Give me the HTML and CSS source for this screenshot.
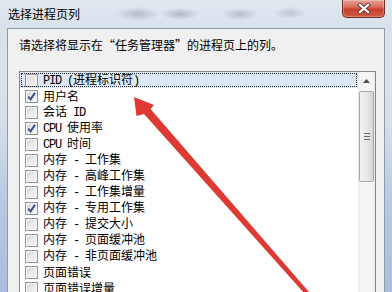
FILE: index.html
```html
<!DOCTYPE html>
<html lang="zh-CN">
<head>
<meta charset="utf-8">
<title>选择进程页列</title>
<link rel="stylesheet" href="styles.css">
</head>
<body>
<div class="win">
  <div class="titlebar">
    <span class="title">选择进程页列</span>
    <div class="close">
      <svg width="16" height="11" viewBox="0 0 16 11">
        <path d="M4 2 L12 9 M12 2 L4 9" stroke="#6a3a35" stroke-width="4" stroke-linecap="square" fill="none"/>
        <path d="M4 2 L12 9 M12 2 L4 9" stroke="#ffffff" stroke-width="2.2" stroke-linecap="square" fill="none"/>
      </svg>
    </div>
  </div>
  <div class="client">
    <p class="prompt">请选择将显示在“任务管理器”的进程页上的列。</p>
    <div class="listbox">
      <div class="items">
        <div class="row sel"><span class="cb"></span><span class="lbl"><span class="en">PID (</span>进程标识符<span class="en">)</span></span></div>
        <div class="row"><span class="cb on"><svg width="11" height="11" viewBox="0 0 11 11"><path d="M2.2 5.6 L4.6 8.4 L9 1.8" stroke="#3c4f8a" stroke-width="2" fill="none"/></svg></span><span class="lbl">用户名</span></div>
        <div class="row"><span class="cb"></span><span class="lbl">会话<span class="en"> ID</span></span></div>
        <div class="row"><span class="cb on"><svg width="11" height="11" viewBox="0 0 11 11"><path d="M2.2 5.6 L4.6 8.4 L9 1.8" stroke="#3c4f8a" stroke-width="2" fill="none"/></svg></span><span class="lbl"><span class="en">CPU </span>使用率</span></div>
        <div class="row"><span class="cb"></span><span class="lbl"><span class="en">CPU </span>时间</span></div>
        <div class="row"><span class="cb"></span><span class="lbl">内存<span class="en"> - </span>工作集</span></div>
        <div class="row"><span class="cb"></span><span class="lbl">内存<span class="en"> - </span>高峰工作集</span></div>
        <div class="row"><span class="cb"></span><span class="lbl">内存<span class="en"> - </span>工作集增量</span></div>
        <div class="row"><span class="cb on"><svg width="11" height="11" viewBox="0 0 11 11"><path d="M2.2 5.6 L4.6 8.4 L9 1.8" stroke="#3c4f8a" stroke-width="2" fill="none"/></svg></span><span class="lbl">内存<span class="en"> - </span>专用工作集</span></div>
        <div class="row"><span class="cb"></span><span class="lbl">内存<span class="en"> - </span>提交大小</span></div>
        <div class="row"><span class="cb"></span><span class="lbl">内存<span class="en"> - </span>页面缓冲池</span></div>
        <div class="row"><span class="cb"></span><span class="lbl">内存<span class="en"> - </span>非页面缓冲池</span></div>
        <div class="row"><span class="cb"></span><span class="lbl">页面错误</span></div>
        <div class="row"><span class="cb"></span><span class="lbl">页面错误增量</span></div>
      </div>
      <div class="vscroll">
        <div class="sb-btn"><svg width="7" height="4" viewBox="0 0 7 4"><path d="M0 4 L3.5 0 L7 4 Z" fill="#4d4d4d"/></svg></div>
        <div class="thumb"><span class="grip"></span></div>
        <div class="track"></div>
      </div>
    </div>
  </div>
  <svg class="arrow" width="392" height="292" viewBox="0 0 392 292">
    <path d="M134 97 L154 105 L150.5 109 L309 292 L305 294 L144 114 L136.5 116 Z" fill="#dc3a33"/>
  </svg>
</div>
</body>
</html>
```

FILE: styles.css
```css
html, body {
  margin: 0;
  padding: 0;
}
body {
  width: 392px;
  height: 292px;
  overflow: hidden;
  font-family: "Noto Sans CJK SC", "Noto Sans", sans-serif;
  font-size: 12px;
  color: #000;
  background: linear-gradient(180deg, #dbe3eb 0%, #d7e0ea 40%, #b7c8e0 70%, #a9bde0 100%);
}
.win {
  position: relative;
  width: 392px;
  height: 292px;
}
.titlebar {
  height: 28px;
  display: flex;
  align-items: flex-start;
  background:
    radial-gradient(ellipse 22px 7px at 138px 14px, rgba(120,130,140,0.4), rgba(120,130,140,0) 100%),
    radial-gradient(ellipse 20px 6px at 180px 14px, rgba(110,120,130,0.4), rgba(110,120,130,0) 100%),
    radial-gradient(ellipse 18px 6px at 240px 14px, rgba(110,120,130,0.35), rgba(110,120,130,0) 100%),
    radial-gradient(ellipse 16px 6px at 290px 13px, rgba(120,130,140,0.3), rgba(120,130,140,0) 100%),
    linear-gradient(180deg, #dfe7ef, #d9e2eb);
}
.title {
  margin-left: 8px;
  margin-top: 5px;
  line-height: 18px;
  font-size: 12px;
  color: #000;
}
.close {
  margin-left: auto;
  margin-right: 7px;
  width: 43px;
  height: 18px;
  box-sizing: border-box;
  border: 1px solid #7a2a22;
  border-top: none;
  border-radius: 0 0 5px 5px;
  background: linear-gradient(180deg, #e5a396 0%, #d9705e 40%, #c4402f 55%, #cf5a45 100%);
  display: flex;
  align-items: center;
  justify-content: center;
  box-shadow: inset 0 0 0 1px rgba(255,255,255,0.25);
}
.client {
  margin: 0 7px;
  height: 264px;
  box-sizing: border-box;
  background: #f0f0f0;
  border: 1px solid #8f9ba8;
  border-bottom: none;
}
.prompt {
  margin: 0;
  padding: 8px 0 0 11px;
  line-height: 16px;
  font-size: 12px;
}
.listbox {
  margin: 18px 0 0 11px;
  width: 357px;
  height: 221px;
  box-sizing: border-box;
  border: 1px solid #828790;
  border-bottom: none;
  background: #fff;
  display: flex;
  overflow: hidden;
}
.items {
  flex: 1;
  display: flex;
  flex-direction: column;
}
.row {
  height: 16px;
  flex-shrink: 0;
  display: flex;
  align-items: center;
  padding-left: 5px;
  line-height: 16px;
  white-space: pre;
}
.row.sel {
  background: #dce8f5;
  outline: 1px dotted #2a2a2a;
  outline-offset: -2px;
}
.cb {
  width: 13px;
  height: 13px;
  box-sizing: border-box;
  border: 1px solid #959595;
  background: linear-gradient(135deg, #d6d6d6 0%, #ececec 60%, #fafafa 100%);
  box-shadow: inset 0 0 0 1px #f6f6f6;
  margin-right: 5px;
  display: flex;
  align-items: center;
  justify-content: center;
  flex-shrink: 0;
}
.lbl {
  font-size: 12px;
  color: #000;
}
.en {
  font-family: "Liberation Mono", monospace;
  font-size: 12px;
  letter-spacing: -1.2px;
}
.vscroll {
  width: 17px;
  display: flex;
  flex-direction: column;
  background: linear-gradient(90deg, #e6e6e6 0%, #f4f4f4 12%, #f4f4f4 88%, #e6e6e6 100%);
}
.sb-btn {
  height: 17px;
  display: flex;
  align-items: center;
  justify-content: center;
}
.thumb {
  margin: 2px 0 0 1px;
  width: 15px;
  height: 91px;
  box-sizing: border-box;
  border: 1px solid #a3a9b0;
  border-radius: 2px;
  background: linear-gradient(90deg, #f2f2f2 0%, #e8e8e8 50%, #d6d6d6 100%);
  display: flex;
  align-items: center;
  justify-content: center;
}
.grip {
  width: 6px;
  height: 5px;
  border-top: 1px solid #6e6e6e;
  border-bottom: 1px solid #6e6e6e;
  background: linear-gradient(180deg, transparent 2px, #6e6e6e 2px, #6e6e6e 3px, transparent 3px);
}
.track {
  flex: 1;
}
.arrow {
  position: absolute;
  left: 0;
  top: 0;
  pointer-events: none;
}
```
